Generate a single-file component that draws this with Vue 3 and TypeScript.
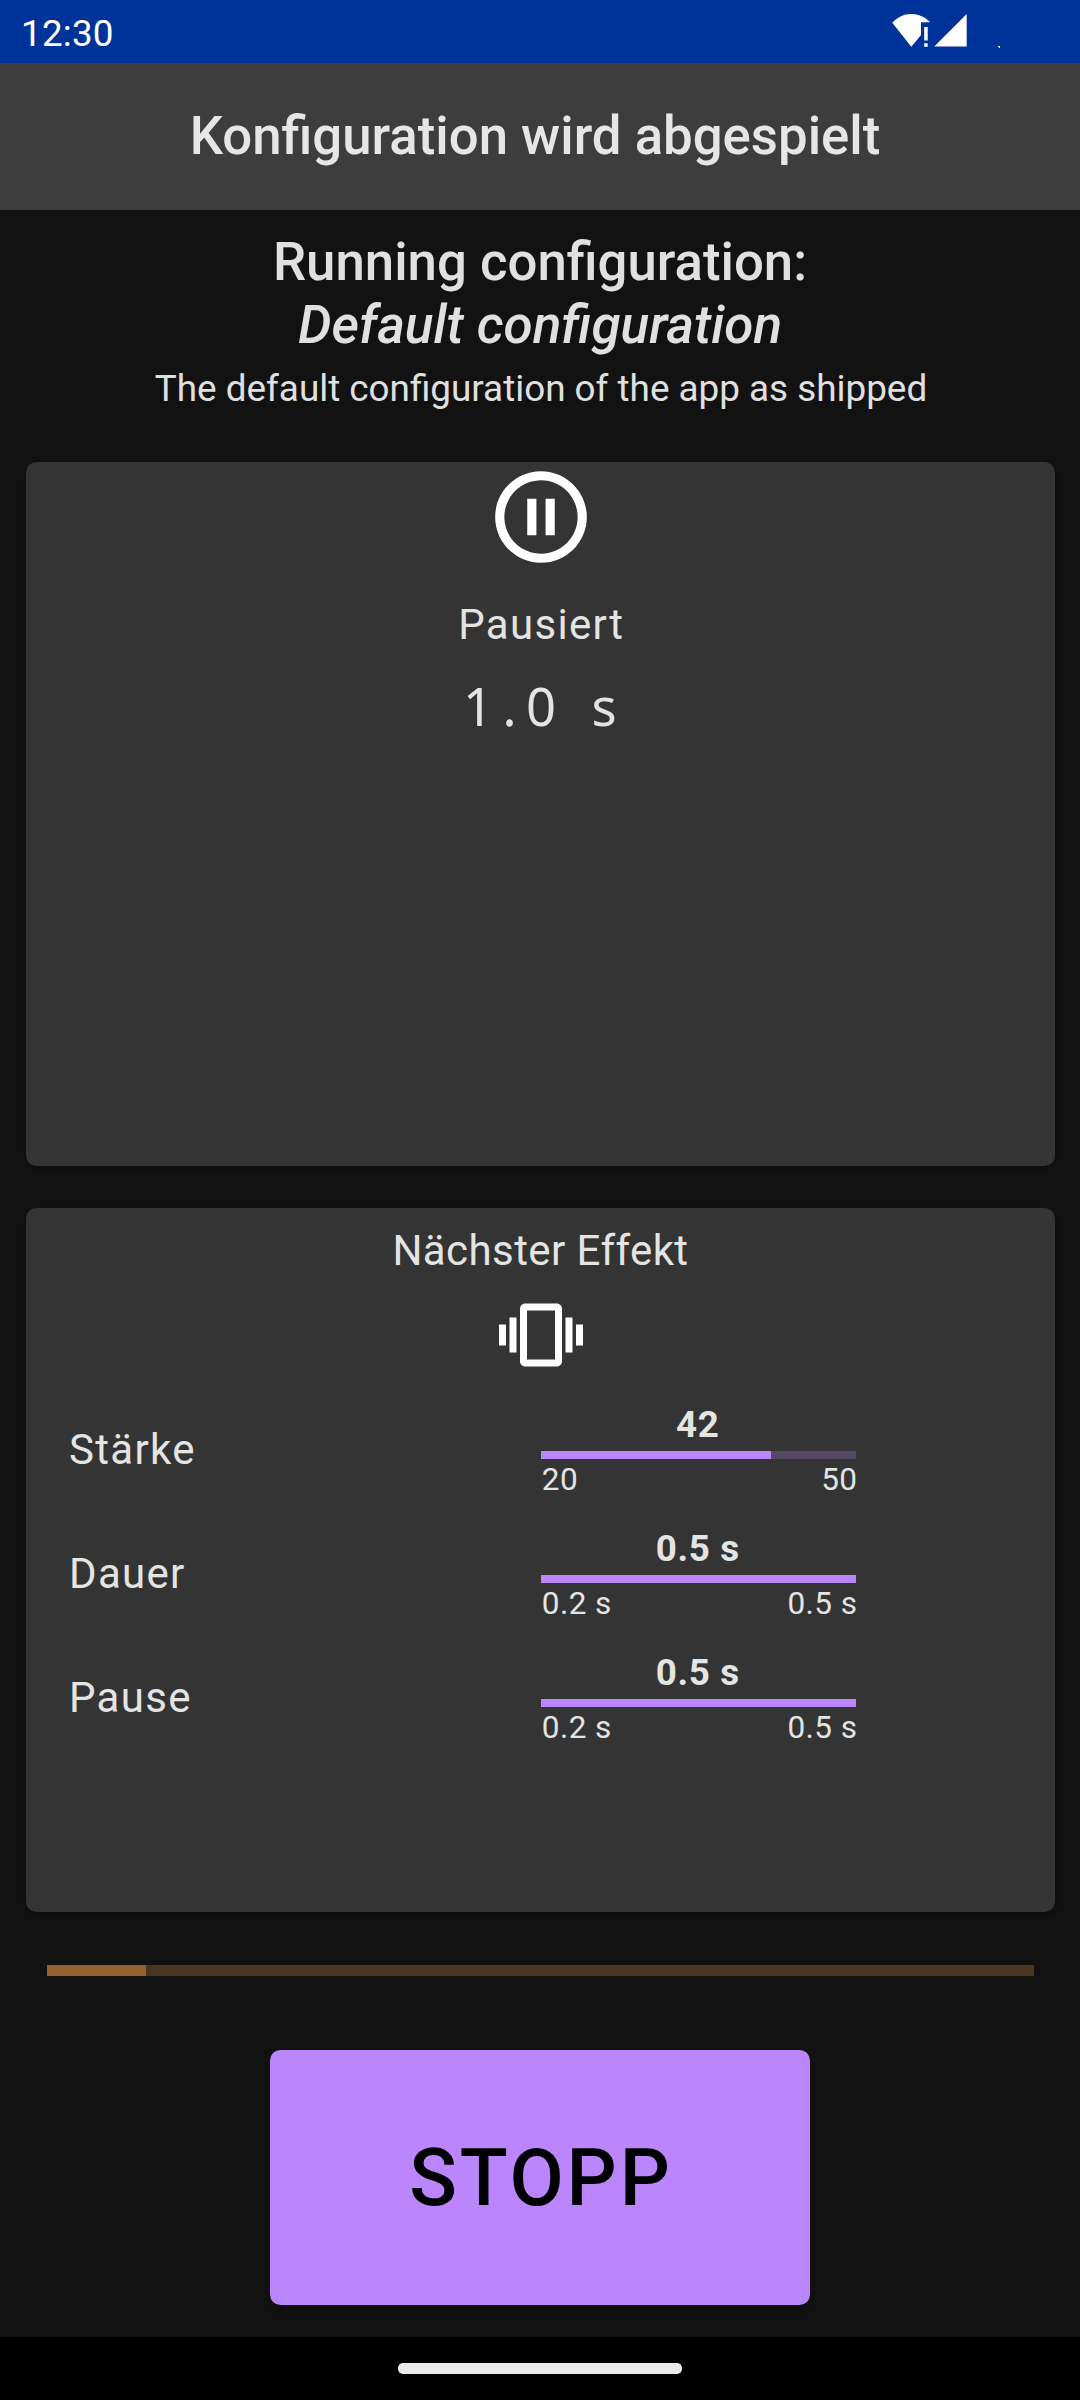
<script setup lang="ts">
interface Meter {
  label: string
  value: string
  min: string
  max: string
  percent: number
}

const remaining: string[] = [...'1.0 s']

const meters: Meter[] = [
  { label: 'Stärke', value: '42', min: '20', max: '50', percent: (21.9 / 30) * 100 },
  { label: 'Dauer', value: '0.5 s', min: '0.2 s', max: '0.5 s', percent: 100 },
  { label: 'Pause', value: '0.5 s', min: '0.2 s', max: '0.5 s', percent: 100 },
]

const progress = 10
</script>

<template>
  <div class="screen">
    <header class="status-bar">
      <span class="clock">12:30</span>
      <svg class="status-icons" width="110" height="63" viewBox="0 0 110 63" aria-hidden="true">
        <path d="M21.3 46.7 2.3 22.8C7.5 17 14 14 21.3 14S35 17 40.3 22.3H31V35z" fill="#fff" />
        <path d="M34.2 27h3.5v13.4h-3.5zM34.2 43.3h3.5v3.4h-3.5z" fill="#fff" />
        <path d="M76.7 14v32.6H44.3z" fill="#fff" />
        <path d="M108 46h2v2h-1v-1h-1z" fill="#fff" />
      </svg>
    </header>

    <div class="app-bar"><h1 class="app-title">Konfiguration wird abgespielt</h1></div>

    <main class="content">
      <section class="heading">
        <h2>Running configuration:</h2>
        <h2 class="name">Default configuration</h2>
        <p>The default configuration of the app as shipped</p>
      </section>

      <section class="card current">
        <svg class="pause-icon" viewBox="0 0 24 24" aria-hidden="true">
          <path
            fill="#fff"
            d="M9 16h2V8H9v8zm3-14C6.48 2 2 6.48 2 12s4.480 10 10 10 10-4.480 10-10S17.520 2 12 2zm0 18c-4.410 0-8-3.590-8-8s3.590-8 8-8 8 3.590 8 8-3.590 8-8 8zm1-4h2V8h-2v8z"
          />
        </svg>
        <div class="state">Pausiert</div>
        <div class="timer"><span v-for="(c, i) in remaining" :key="i">{{ c }}</span></div>
      </section>

      <section class="card next">
        <div class="next-title">Nächster Effekt</div>
        <svg class="vibration-icon" viewBox="0 0 24 24" aria-hidden="true">
          <path
            fill="#fff"
            d="M0 15h2V9H0v6zm3 2h2V7H3v10zm19-8v6h2V9h-2zm-3 8h2V7h-2v10zM16.500 3h-9C6.670 3 6 3.670 6 4.500v15c0 .830.670 1.500 1.500 1.500h9c.830 0 1.500-.670 1.500-1.500v-15c0-.830-.670-1.500-1.500-1.500zM16 19H8V5h8v14z"
          />
        </svg>
        <div class="meters">
          <div v-for="m in meters" :key="m.label" class="meter-row">
            <div class="meter-label">{{ m.label }}</div>
            <div class="meter">
              <div class="meter-value">{{ m.value }}</div>
              <div class="track"><div class="fill" :style="{ width: m.percent + '%' }"></div></div>
              <div class="range"><span>{{ m.min }}</span><span>{{ m.max }}</span></div>
            </div>
          </div>
        </div>
      </section>

      <div class="progress"><div class="progress-fill" :style="{ width: progress + '%' }"></div></div>

      <button class="stop" type="button">STOPP</button>
    </main>

    <footer class="nav-bar"><div class="nav-pill"></div></footer>
  </div>
</template>

<style>
body {
  margin: 0;
  background: #121212;
}
</style>

<style scoped>
.screen {
  display: flex;
  flex-direction: column;
  width: 1080px;
  height: 2400px;
  overflow: hidden;
  background: #121212;
  color: #e4e4e4;
  font-family: Roboto, sans-serif;
}

.status-bar {
  display: flex;
  flex: none;
  align-items: center;
  justify-content: space-between;
  box-sizing: border-box;
  height: 63px;
  padding: 0 80px 0 21px;
  background: #003399;
  color: #fff;
}

.clock {
  padding-top: 4px;
  font-size: 36.75px;
  letter-spacing: 0.25px;
  line-height: 43px;
}

.app-bar {
  display: flex;
  flex: none;
  align-items: center;
  justify-content: center;
  box-sizing: border-box;
  height: 147px;
  padding: 0 10px 1px 0;
  background: #3d3d3d;
}

.app-title {
  margin: 0;
  color: #e6e6e6;
  font-size: 52.74px;
  font-weight: 500;
  line-height: 62px;
}

.content {
  display: flex;
  flex: 1;
  flex-direction: column;
  align-items: center;
}

.heading {
  box-sizing: border-box;
  height: 252px;
  padding-top: 21px;
  color: #e0e0e0;
  text-align: center;
}

.heading h2 {
  margin: 0 0 1px;
  font-size: 52.74px;
  font-weight: 500;
  line-height: 62px;
}

.heading .name {
  font-size: 53px;
  font-style: italic;
}

.heading p {
  margin: 11px 0 0;
  padding-left: 2px;
  font-size: 36.85px;
  line-height: 43px;
}

.card {
  display: flex;
  flex: none;
  flex-direction: column;
  align-items: center;
  box-sizing: border-box;
  width: 1029px;
  height: 704px;
  margin-left: 1px;
  border-radius: 10.5px;
  background: #343434;
  box-shadow: 0 2px 4px rgba(0, 0, 0, 0.3);
}

.pause-icon {
  width: 110px;
  height: 110px;
}

.state,
.next-title,
.meter-label {
  font-size: 42px;
  letter-spacing: 0.03125em;
  line-height: 49px;
}

.state {
  margin-top: 28px;
  padding-left: 1.5px;
}

.timer {
  margin-top: 26px;
  padding-left: 1px;
  font-family: 'Noto Sans', sans-serif;
  font-size: 52.5px;
  line-height: 61px;
  white-space: pre;
}

.timer span {
  display: inline-block;
  width: 31.5px;
  text-align: center;
}

.next {
  margin-top: 42px;
}

.next-title {
  margin-top: 18px;
  letter-spacing: 0.01em;
}

.vibration-icon {
  width: 84px;
  height: 84px;
  margin-top: 18px;
}

.meters {
  align-self: stretch;
  padding-left: 42px;
}

.meter-row {
  display: grid;
  grid-template-columns: 473px 315px;
  height: 124px;
}

.meter-label {
  padding: 48px 0 0 1px;
}

.meter {
  padding-top: 26px;
}

.meter-value {
  padding-right: 1.5px;
  font-size: 36.75px;
  font-weight: 700;
  letter-spacing: 0.0179em;
  line-height: 43px;
  text-align: center;
}

.track {
  height: 8px;
  margin-top: 5px;
  background: #554862;
}

.fill {
  height: 100%;
  background: #bb86fc;
}

.range {
  display: flex;
  justify-content: space-between;
  margin: 2px -1.5px 0 0;
  padding-left: 0.8px;
  font-size: 31.5px;
  letter-spacing: 0.45px;
  line-height: 37px;
}

.progress {
  flex: none;
  width: 987px;
  height: 11px;
  margin: 53px 0 0 1px;
  background: #4a3520;
}

.progress-fill {
  height: 100%;
  background: #94622f;
}

.stop {
  flex: none;
  width: 540px;
  height: 255px;
  margin-top: 74px;
  padding: 0 0 0 2px;
  border: 0;
  border-radius: 10.5px;
  background: #bb86fc;
  box-shadow: 0 5px 9px rgba(0, 0, 0, 0.2);
  color: #000;
  font-family: inherit;
  font-size: 78.75px;
  font-weight: 500;
  letter-spacing: 0.0357em;
  line-height: 92px;
}

.nav-bar {
  display: flex;
  flex: none;
  align-items: flex-start;
  justify-content: center;
  box-sizing: border-box;
  height: 63px;
  padding-top: 26px;
  background: #000;
}

.nav-pill {
  width: 284px;
  height: 11px;
  border-radius: 5px;
  background: #ebebeb;
}
</style>
